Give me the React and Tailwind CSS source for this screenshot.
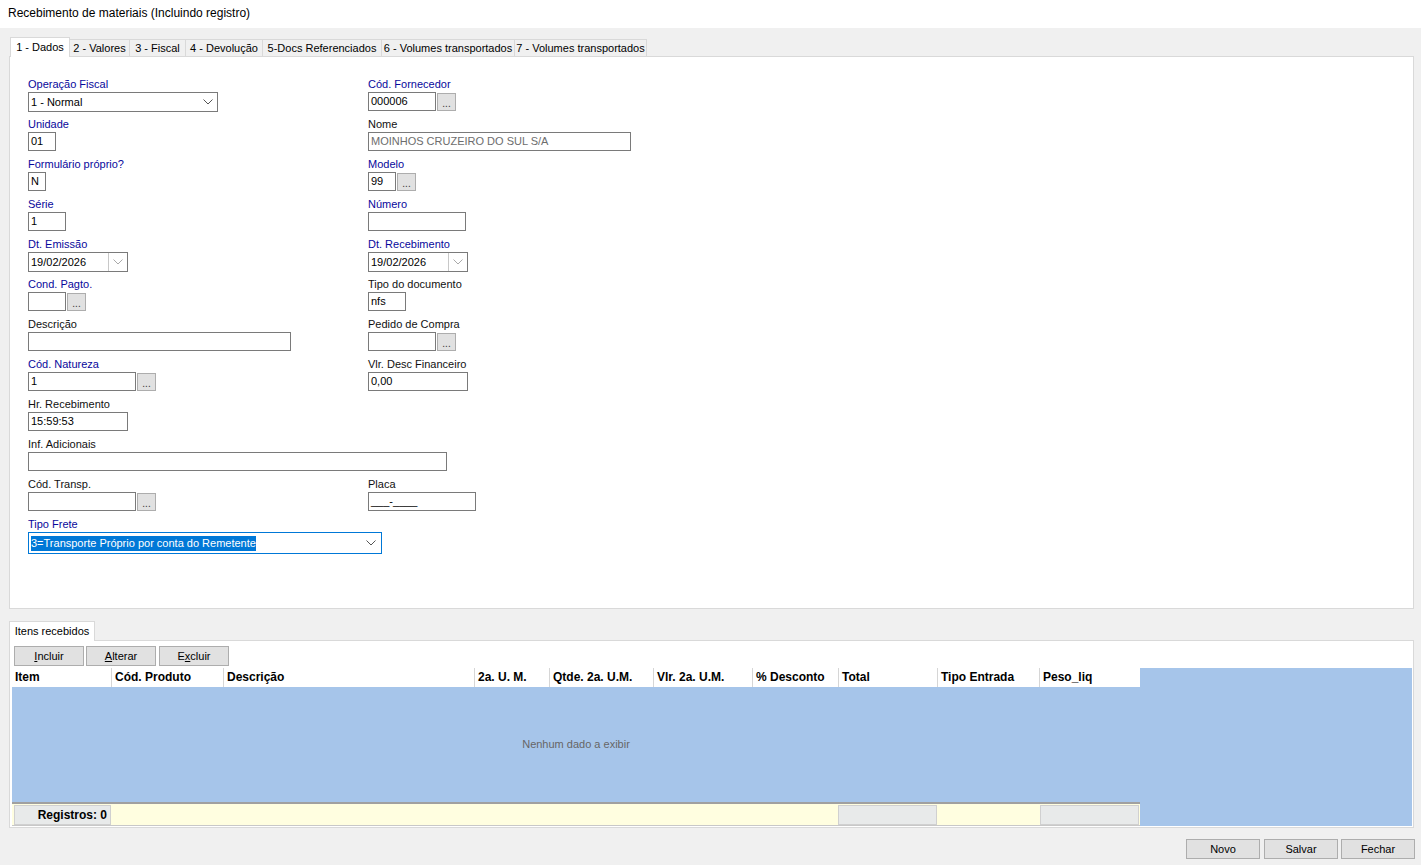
const font = { fontFamily: '"Liberation Sans", Arial, sans-serif' };

function Label({ children, blue }) {
  return (
    <div className={`h-[16px] leading-[16px] text-[11px] ${blue ? 'text-[#08089c]' : 'text-[#111]'}`}>
      {children}
    </div>
  );
}

function Box({ w, children, color = 'text-black' }) {
  return (
    <div
      className={`h-[19px] border border-[#7a7a7a] bg-white text-[11px] leading-[17px] pl-[2px] whitespace-nowrap overflow-hidden ${color}`}
      style={{ width: w }}
    >
      {children}
    </div>
  );
}

function Dots() {
  return (
    <div className="ml-[1px] w-[19px] h-[18px] mt-[1px] border border-[#adadad] bg-[#e1e1e1] text-[10px] leading-[20px] text-center text-[#333]">
      ...
    </div>
  );
}

function Chevron({ color = '#555' }) {
  return (
    <svg width="10" height="6" viewBox="0 0 10 6">
      <path d="M0.5 0.5 L5 5 L9.5 0.5" fill="none" stroke={color} strokeWidth="1" />
    </svg>
  );
}

function Field({ label, blue, children }) {
  return (
    <div className="h-[40px]">
      <Label blue={blue}>{label}</Label>
      <div className="flex items-start">{children}</div>
    </div>
  );
}

function DateBox({ value }) {
  return (
    <div className="flex h-[20px] w-[100px] border border-[#7a7a7a] bg-white text-[11px] leading-[18px]">
      <div className="flex-1 pl-[2px]">{value}</div>
      <div className="w-[19px] border-l border-[#c8c8c8] flex items-center justify-center">
        <Chevron color="#aaa" />
      </div>
    </div>
  );
}

const tabs = [
  ['2 - Valores', 60],
  ['3 - Fiscal', 56],
  ['4 - Devolução', 77],
  ['5-Docs Referenciados', 119],
  ['6 - Volumes transportados', 133],
  ['7 - Volumes transportados', 132],
];

const cols = [
  ['Item', 99],
  ['Cód. Produto', 112],
  ['Descrição', 251],
  ['2a. U. M.', 75],
  ['Qtde. 2a. U.M.', 104],
  ['Vlr. 2a. U.M.', 99],
  ['% Desconto', 86],
  ['Total', 99],
  ['Tipo Entrada', 102],
  ['Peso_liq', 101],
];

function Btn({ children, w = 74 }) {
  return (
    <div
      className="h-[20px] border border-[#adadad] bg-[#e1e1e1] text-[11px] leading-[18px] text-center text-black"
      style={{ width: w }}
    >
      {children}
    </div>
  );
}

export default function App() {
  return (
    <div className="w-[1421px] h-[865px] bg-[#f0f0f0] overflow-hidden text-black" style={font}>
      {/* title */}
      <div className="h-[28px] bg-white pl-[8px] pt-[5px] text-[12px] leading-[16px]">
        Recebimento de materiais (Incluindo registro)
      </div>

      {/* tabs */}
      <div className="flex items-end pl-[10px] h-[28px]">
        <div className="h-[20px] w-[60px] bg-white border border-b-0 border-[#d9d9d9] text-[11px] leading-[18px] text-center whitespace-nowrap relative top-[1px] z-10">
          1 - Dados
        </div>
        {tabs.map(([t, w]) => (
          <div
            key={t}
            className="h-[17px] bg-[#f0f0f0] border border-b-0 border-l-0 border-[#d9d9d9] text-[11px] leading-[16px] text-center whitespace-nowrap"
            style={{ width: w }}
          >
            {t}
          </div>
        ))}
      </div>

      {/* main panel */}
      <div className="ml-[9px] w-[1405px] h-[553px] bg-white border border-[#d9d9d9] pl-[18px] pt-[19px]">
        <div className="grid grid-cols-[340px_1fr]">
          <Field label="Operação Fiscal" blue>
            <div className="flex items-center justify-between h-[20px] w-[190px] border border-[#7a7a7a] bg-white text-[11px] pl-[2px] pr-[4px]">
              <span>1 - Normal</span>
              <Chevron />
            </div>
          </Field>
          <Field label="Cód. Fornecedor" blue>
            <Box w={68}>000006</Box>
            <Dots />
          </Field>

          <Field label="Unidade" blue>
            <Box w={28}>01</Box>
          </Field>
          <Field label="Nome">
            <Box w={263} color="text-[#6d6d6d]">MOINHOS CRUZEIRO DO SUL S/A</Box>
          </Field>

          <Field label="Formulário próprio?" blue>
            <Box w={18}>N</Box>
          </Field>
          <Field label="Modelo" blue>
            <Box w={28}>99</Box>
            <Dots />
          </Field>

          <Field label="Série" blue>
            <Box w={38}>1</Box>
          </Field>
          <Field label="Número" blue>
            <Box w={98} />
          </Field>

          <Field label="Dt. Emissão" blue>
            <DateBox value="19/02/2026" />
          </Field>
          <Field label="Dt. Recebimento" blue>
            <DateBox value="19/02/2026" />
          </Field>

          <Field label="Cond. Pagto." blue>
            <Box w={38} />
            <Dots />
          </Field>
          <Field label="Tipo do documento">
            <Box w={38}>nfs</Box>
          </Field>

          <Field label="Descrição">
            <Box w={263} />
          </Field>
          <Field label="Pedido de Compra">
            <Box w={68} />
            <Dots />
          </Field>

          <Field label="Cód. Natureza" blue>
            <Box w={108}>1</Box>
            <Dots />
          </Field>
          <Field label="Vlr. Desc Financeiro">
            <Box w={100}>0,00</Box>
          </Field>

          <Field label="Hr. Recebimento">
            <Box w={100}>15:59:53</Box>
          </Field>
          <div />

          <div className="col-span-2">
            <Field label="Inf. Adicionais">
              <Box w={419} />
            </Field>
          </div>

          <Field label="Cód. Transp.">
            <Box w={108} />
            <Dots />
          </Field>
          <Field label="Placa">
            <Box w={108}>___-____</Box>
          </Field>

          <div className="col-span-2">
            <Field label="Tipo Frete" blue>
              <div className="flex items-center justify-between h-[22px] w-[354px] border border-[#0078d7] bg-white text-[11px] pl-[2px] pr-[5px]">
                <span className="bg-[#0078d7] text-white leading-[15px]">3=Transporte Próprio por conta do Remetente</span>
                <Chevron />
              </div>
            </Field>
          </div>
        </div>
      </div>

      {/* items tab */}
      <div className="pl-[9px] h-[31px] flex items-end">
        <div className="h-[20px] w-[86px] bg-white border border-b-0 border-[#d9d9d9] text-[11px] leading-[18px] text-center whitespace-nowrap relative top-[1px]">
          Itens recebidos
        </div>
      </div>

      <div className="ml-[9px] w-[1405px] h-[188px] bg-white border border-[#d9d9d9] pl-[2px] pt-[5px]">
        <div className="flex gap-[2px] pl-[2px]">
          <div className="h-[20px] w-[70px] border border-[#adadad] bg-[#e1e1e1] text-[11px] leading-[18px] text-center">
            <span className="underline">I</span>ncluir
          </div>
          <div className="h-[20px] w-[70px] border border-[#adadad] bg-[#e1e1e1] text-[11px] leading-[18px] text-center">
            <span className="underline">A</span>lterar
          </div>
          <div className="h-[20px] w-[70px] border border-[#adadad] bg-[#e1e1e1] text-[11px] leading-[18px] text-center ml-[1px]">
            E<span className="underline">x</span>cluir
          </div>
        </div>

        <div className="flex mt-[2px] w-[1400px] h-[158px]">
          <div className="w-[1128px] flex flex-col">
            <div className="h-[19px] flex bg-white">
              {cols.map(([c, w], i) => (
                <div
                  key={c}
                  className={`h-full pl-[3px] text-[12px] font-bold leading-[19px] whitespace-nowrap ${i > 0 ? 'border-l border-[#d6d6d6]' : ''}`}
                  style={{ width: w }}
                >
                  {c}
                </div>
              ))}
            </div>
            <div className="h-[115px] bg-[#a6c5ea] flex items-center justify-center text-[11px] text-[#666]">
              Nenhum dado a exibir
            </div>
            <div className="h-[24px] bg-[#fffee0] border-t-2 border-[#a0a0a0] border-b border-b-[#c8c8c8] flex items-center pl-[2px]">
              <div className="h-[20px] w-[97px] bg-[#e8eaea] border border-[#d0d0d0] text-[12px] font-bold leading-[18px] text-right pr-[3px]">
                Registros: 0
              </div>
              <div className="w-[727px]" />
              <div className="h-[20px] w-[99px] bg-[#e8eaea] border border-[#d0d0d0]" />
              <div className="w-[103px]" />
              <div className="h-[20px] w-[99px] bg-[#e8eaea] border border-[#d0d0d0]" />
            </div>
          </div>
          <div className="flex-1 bg-[#a6c5ea]" />
        </div>
      </div>

      {/* bottom buttons */}
      <div className="flex justify-end pr-[6px] pt-[11px]">
        <Btn>Novo</Btn>
        <div className="ml-[4px]">
          <Btn>Salvar</Btn>
        </div>
        <div className="ml-[3px]">
          <Btn>Fechar</Btn>
        </div>
      </div>
    </div>
  );
}
